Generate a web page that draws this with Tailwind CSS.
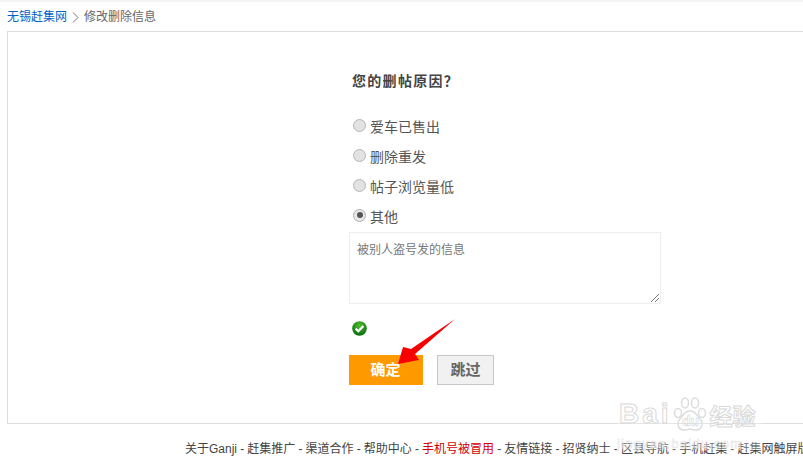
<!DOCTYPE html>
<html lang="zh-CN">
<head>
  <meta charset="UTF-8" />
  <title>修改删除信息</title>
  <script src="https://cdn.jsdelivr.net/npm/@tailwindcss/browser@4"></script>
</head>
<body class="relative h-[472px] w-[803px] overflow-hidden bg-white font-['Liberation_Sans','Noto_Sans_CJK_SC',sans-serif] text-xs text-[#666]">

  <div class="h-[2px] bg-[#f4f4f4]"></div>

  <!-- breadcrumb -->
  <div class="flex h-[29px] items-center pl-[7px] pt-[1px] leading-none">
    <a class="text-[#0663c5]">无锡赶集网</a>
    <svg class="mx-[5px]" width="7" height="11" viewBox="0 0 7 11" fill="none" stroke="#777" stroke-width="1"><path d="M1 .5 6 5.5 1 10.5" /></svg>
    <span>修改删除信息</span>
  </div>

  <!-- main box -->
  <div class="ml-[7px] h-[393px] w-[820px] border border-[#ddd] pl-[341px] pt-[40px]">
    <h2 class="h-[18px] pl-[3px] text-sm leading-[18px] font-bold tracking-[1.300px] text-[#444]">您的删帖原因？</h2>

    <div class="mt-[20px] flex flex-col text-sm text-[#555]">
      <label class="flex h-[30px] items-center">
        <span class="ml-[4px] h-[13px] w-[13px] rounded-full border border-[#b5b5b5] bg-[#e2e2e2]"></span>
        <span class="ml-[4px] pt-[3px]">爱车已售出</span>
      </label>
      <label class="flex h-[30px] items-center">
        <span class="ml-[4px] h-[13px] w-[13px] rounded-full border border-[#b5b5b5] bg-[#e2e2e2]"></span>
        <span class="ml-[4px] pt-[3px]">删除重发</span>
      </label>
      <label class="flex h-[30px] items-center">
        <span class="ml-[4px] h-[13px] w-[13px] rounded-full border border-[#b5b5b5] bg-[#e2e2e2]"></span>
        <span class="ml-[4px] pt-[3px]">帖子浏览量低</span>
      </label>
      <label class="flex h-[30px] items-center">
        <span class="ml-[4px] flex h-[13px] w-[13px] items-center justify-center rounded-full border border-[#b0b0b0] bg-[#e8e8e8]">
          <span class="h-[6px] w-[6px] rounded-full bg-[#555]"></span>
        </span>
        <span class="ml-[4px] pt-[3px]">其他</span>
      </label>
    </div>

    <div class="relative mt-[2px] h-[72px] w-[312px] border border-[#eee] px-[7px] py-[9px] leading-[16px] text-[#777]">
      被别人盗号发的信息
      <svg class="absolute right-[1px] bottom-[1px]" width="8" height="8" viewBox="0 0 8 8" fill="none" stroke="#777" stroke-width="1"><path d="M0 8 8 0M4 8 8 4" /></svg>
    </div>

    <svg class="mt-[17px] ml-[3px]" width="15" height="15" viewBox="0 0 15 15">
      <defs>
        <radialGradient id="okGreen" cx="50%" cy="30%" r="70%">
          <stop offset="0" stop-color="#4fbf2f" />
          <stop offset="1" stop-color="#056a0c" />
        </radialGradient>
      </defs>
      <circle cx="7.5" cy="7.5" r="7.3" fill="url(#okGreen)" />
      <path d="M3.600 7.600 6.300 10.200 11.400 5" fill="none" stroke="#fff" stroke-width="2.200" />
    </svg>

    <div class="mt-[19px] flex gap-[14px] font-bold">
      <button class="h-[30px] w-[74px] bg-[#ff9900] pr-[1px] pb-[1px] text-[15px] text-white">确定</button>
      <button class="h-[30px] w-[57px] border border-[#c6c6c6] bg-[#f1f1f1] pb-[1px] text-[15px] text-[#666]">跳过</button>
    </div>
  </div>

  <!-- footer -->
  <div class="mt-[16px] whitespace-nowrap pl-[185px] leading-[18px] text-[#444] [word-spacing:-0.2px]">
    关于Ganji - 赶集推广 - 渠道合作 - 帮助中心 - <span class="text-[#d00000]">手机号被冒用</span> - 友情链接 - 招贤纳士 - 区县导航 - 手机赶集 - 赶集网触屏版
  </div>

  <!-- red annotation arrow -->
  <svg class="absolute top-[315px] left-[392px]" width="68" height="54" viewBox="0 0 68 54">
    <path d="M63 4 19 34 11 32 6 49 27 45 23 39Z" fill="#f80000" />
  </svg>

  <!-- baidu watermark -->
  <div class="absolute top-[395px] left-[617px] h-[55px] w-[145px] bg-white/25 text-transparent [-webkit-text-stroke:1px_#d9d9d9]">
    <div class="flex h-[40px] items-end leading-none">
      <span class="ml-[2px] pb-[7px] text-[28px] font-bold tracking-[3px]">Bai</span>
      <svg class="mb-[1px]" width="36" height="38" viewBox="0 0 36 38" fill="none" stroke="#dcdcdc" stroke-width="1.500">
        <ellipse cx="6" cy="17" rx="3.500" ry="4.500" />
        <ellipse cx="13" cy="7" rx="3.500" ry="5" />
        <ellipse cx="23" cy="7" rx="3.500" ry="5" />
        <ellipse cx="30" cy="17" rx="3.500" ry="4.500" />
        <path d="M18 15C12 15 11 20 8 23 4 27 6 34 12 34 15 34 16 33 18 33 20 33 21 34 24 34 30 34 32 27 28 23 25 20 24 15 18 15Z" />
      </svg>
      <span class="absolute top-[19px] left-[65px] text-[14px] font-bold [-webkit-text-stroke:0.500px_#d0d0d0]">du</span>
      <span class="ml-[2px] pb-[6px] text-[23px] font-bold">经验</span>
    </div>
    <div class="mt-[2px] text-[13px] leading-none tracking-[1.200px] [-webkit-text-stroke:0.500px_#e2e2e2]">jingyan.baidu.com</div>
  </div>
</body>
</html>
